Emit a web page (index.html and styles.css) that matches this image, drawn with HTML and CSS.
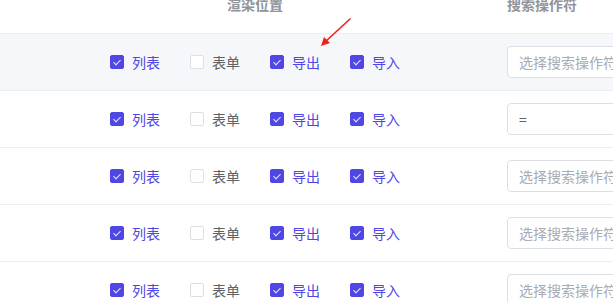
FILE: index.html
```html
<!DOCTYPE html>
<html lang="zh">
<head>
<meta charset="utf-8">
<link rel="stylesheet" href="styles.css">
</head>
<body>
<div class="table">
  <div class="row head">
    <div class="c1"></div>
    <div class="c2"><span class="th">渲染位置</span></div>
    <div class="c3"></div>
    <div class="c4"><span class="th">搜索操作符</span></div>
  </div>
  <div class="row hover">
    <div class="c1"></div>
    <div class="c2"><div class="group">
      <label class="cb on"><span class="box"></span><span class="lb">列表</span></label>
      <label class="cb"><span class="box"></span><span class="lb">表单</span></label>
      <label class="cb on"><span class="box"></span><span class="lb">导出</span></label>
      <label class="cb on"><span class="box"></span><span class="lb">导入</span></label>
    </div></div>
    <div class="c3"></div>
    <div class="c4"><div class="input ph">选择搜索操作符</div></div>
  </div>
  <div class="row">
    <div class="c1"></div>
    <div class="c2"><div class="group">
      <label class="cb on"><span class="box"></span><span class="lb">列表</span></label>
      <label class="cb"><span class="box"></span><span class="lb">表单</span></label>
      <label class="cb on"><span class="box"></span><span class="lb">导出</span></label>
      <label class="cb on"><span class="box"></span><span class="lb">导入</span></label>
    </div></div>
    <div class="c3"></div>
    <div class="c4"><div class="input">=</div></div>
  </div>
  <div class="row">
    <div class="c1"></div>
    <div class="c2"><div class="group">
      <label class="cb on"><span class="box"></span><span class="lb">列表</span></label>
      <label class="cb"><span class="box"></span><span class="lb">表单</span></label>
      <label class="cb on"><span class="box"></span><span class="lb">导出</span></label>
      <label class="cb on"><span class="box"></span><span class="lb">导入</span></label>
    </div></div>
    <div class="c3"></div>
    <div class="c4"><div class="input ph">选择搜索操作符</div></div>
  </div>
  <div class="row">
    <div class="c1"></div>
    <div class="c2"><div class="group">
      <label class="cb on"><span class="box"></span><span class="lb">列表</span></label>
      <label class="cb"><span class="box"></span><span class="lb">表单</span></label>
      <label class="cb on"><span class="box"></span><span class="lb">导出</span></label>
      <label class="cb on"><span class="box"></span><span class="lb">导入</span></label>
    </div></div>
    <div class="c3"></div>
    <div class="c4"><div class="input ph">选择搜索操作符</div></div>
  </div>
  <div class="row">
    <div class="c1"></div>
    <div class="c2"><div class="group">
      <label class="cb on"><span class="box"></span><span class="lb">列表</span></label>
      <label class="cb"><span class="box"></span><span class="lb">表单</span></label>
      <label class="cb on"><span class="box"></span><span class="lb">导出</span></label>
      <label class="cb on"><span class="box"></span><span class="lb">导入</span></label>
    </div></div>
    <div class="c3"></div>
    <div class="c4"><div class="input ph">选择搜索操作符</div></div>
  </div>
  <svg class="arrow" width="40" height="40" viewBox="0 0 40 40">
    <line x1="31" y1="1" x2="6" y2="24" stroke="#f0201c" stroke-width="1.6" stroke-linecap="round"/>
    <polygon points="2,28 5,19 11,25" fill="#f0201c"/>
  </svg>
</div>
</body>
</html>
```
FILE: styles.css
```css
html, body {
  margin: 0;
  padding: 0;
  background: #fff;
}
body {
  font-family: "Noto Sans CJK SC", "Noto Sans", sans-serif;
  font-size: 14px;
  color: #606266;
  overflow: hidden;
}
.table {
  position: relative;
  width: 613px;
  height: 302px;
  overflow: hidden;
}
.row {
  display: flex;
  height: 56px;
  border-bottom: 1px solid #ebeef5;
  align-items: center;
}
.row.head {
  height: 33px;
  align-items: flex-start;
  border-bottom: 1px solid #ebeef5;
}
.row.hover {
  background: #f5f7fa;
}
.c1 { width: 98px; flex: none; }
.c2 {
  width: 314px;
  flex: none;
  padding: 0 12px;
  box-sizing: border-box;
  display: flex;
  justify-content: center;
}
.c3 { width: 83px; flex: none; }
.c4 {
  flex: none;
  width: 240px;
  padding: 0 12px;
  box-sizing: border-box;
}
.th {
  display: block;
  font-weight: bold;
  color: #909399;
  line-height: 14px;
  margin-top: -3px;
  white-space: nowrap;
}
.group {
  display: flex;
  align-items: center;
  white-space: nowrap;
}
.cb {
  display: flex;
  align-items: center;
  margin-right: 30px;
  height: 32px;
  color: #606266;
}
.cb:last-child { margin-right: 0; }
.box {
  position: relative;
  width: 14px;
  height: 14px;
  box-sizing: border-box;
  border: 1px solid #dcdfe6;
  border-radius: 2px;
  background: #fff;
}
.lb {
  padding-left: 8px;
  line-height: 14px;
}
.cb.on { color: #5046e5; }
.cb.on .box {
  background: #5046e5;
  border-color: #5046e5;
}
.cb.on .box::after {
  content: "";
  position: absolute;
  left: 4px;
  top: 1.5px;
  width: 3px;
  height: 6px;
  border: 1px solid #e8e6ff;
  border-left: 0;
  border-top: 0;
  transform: rotate(45deg);
}
.input {
  width: 200px;
  height: 32px;
  box-sizing: border-box;
  border: 1px solid #dcdfe6;
  border-radius: 4px;
  background: #fff;
  padding: 0 11px;
  line-height: 30px;
  color: #606266;
  white-space: nowrap;
  overflow: hidden;
}
.input.ph { color: #a8abb2; }
.arrow {
  position: absolute;
  left: 319px;
  top: 18px;
}
```
